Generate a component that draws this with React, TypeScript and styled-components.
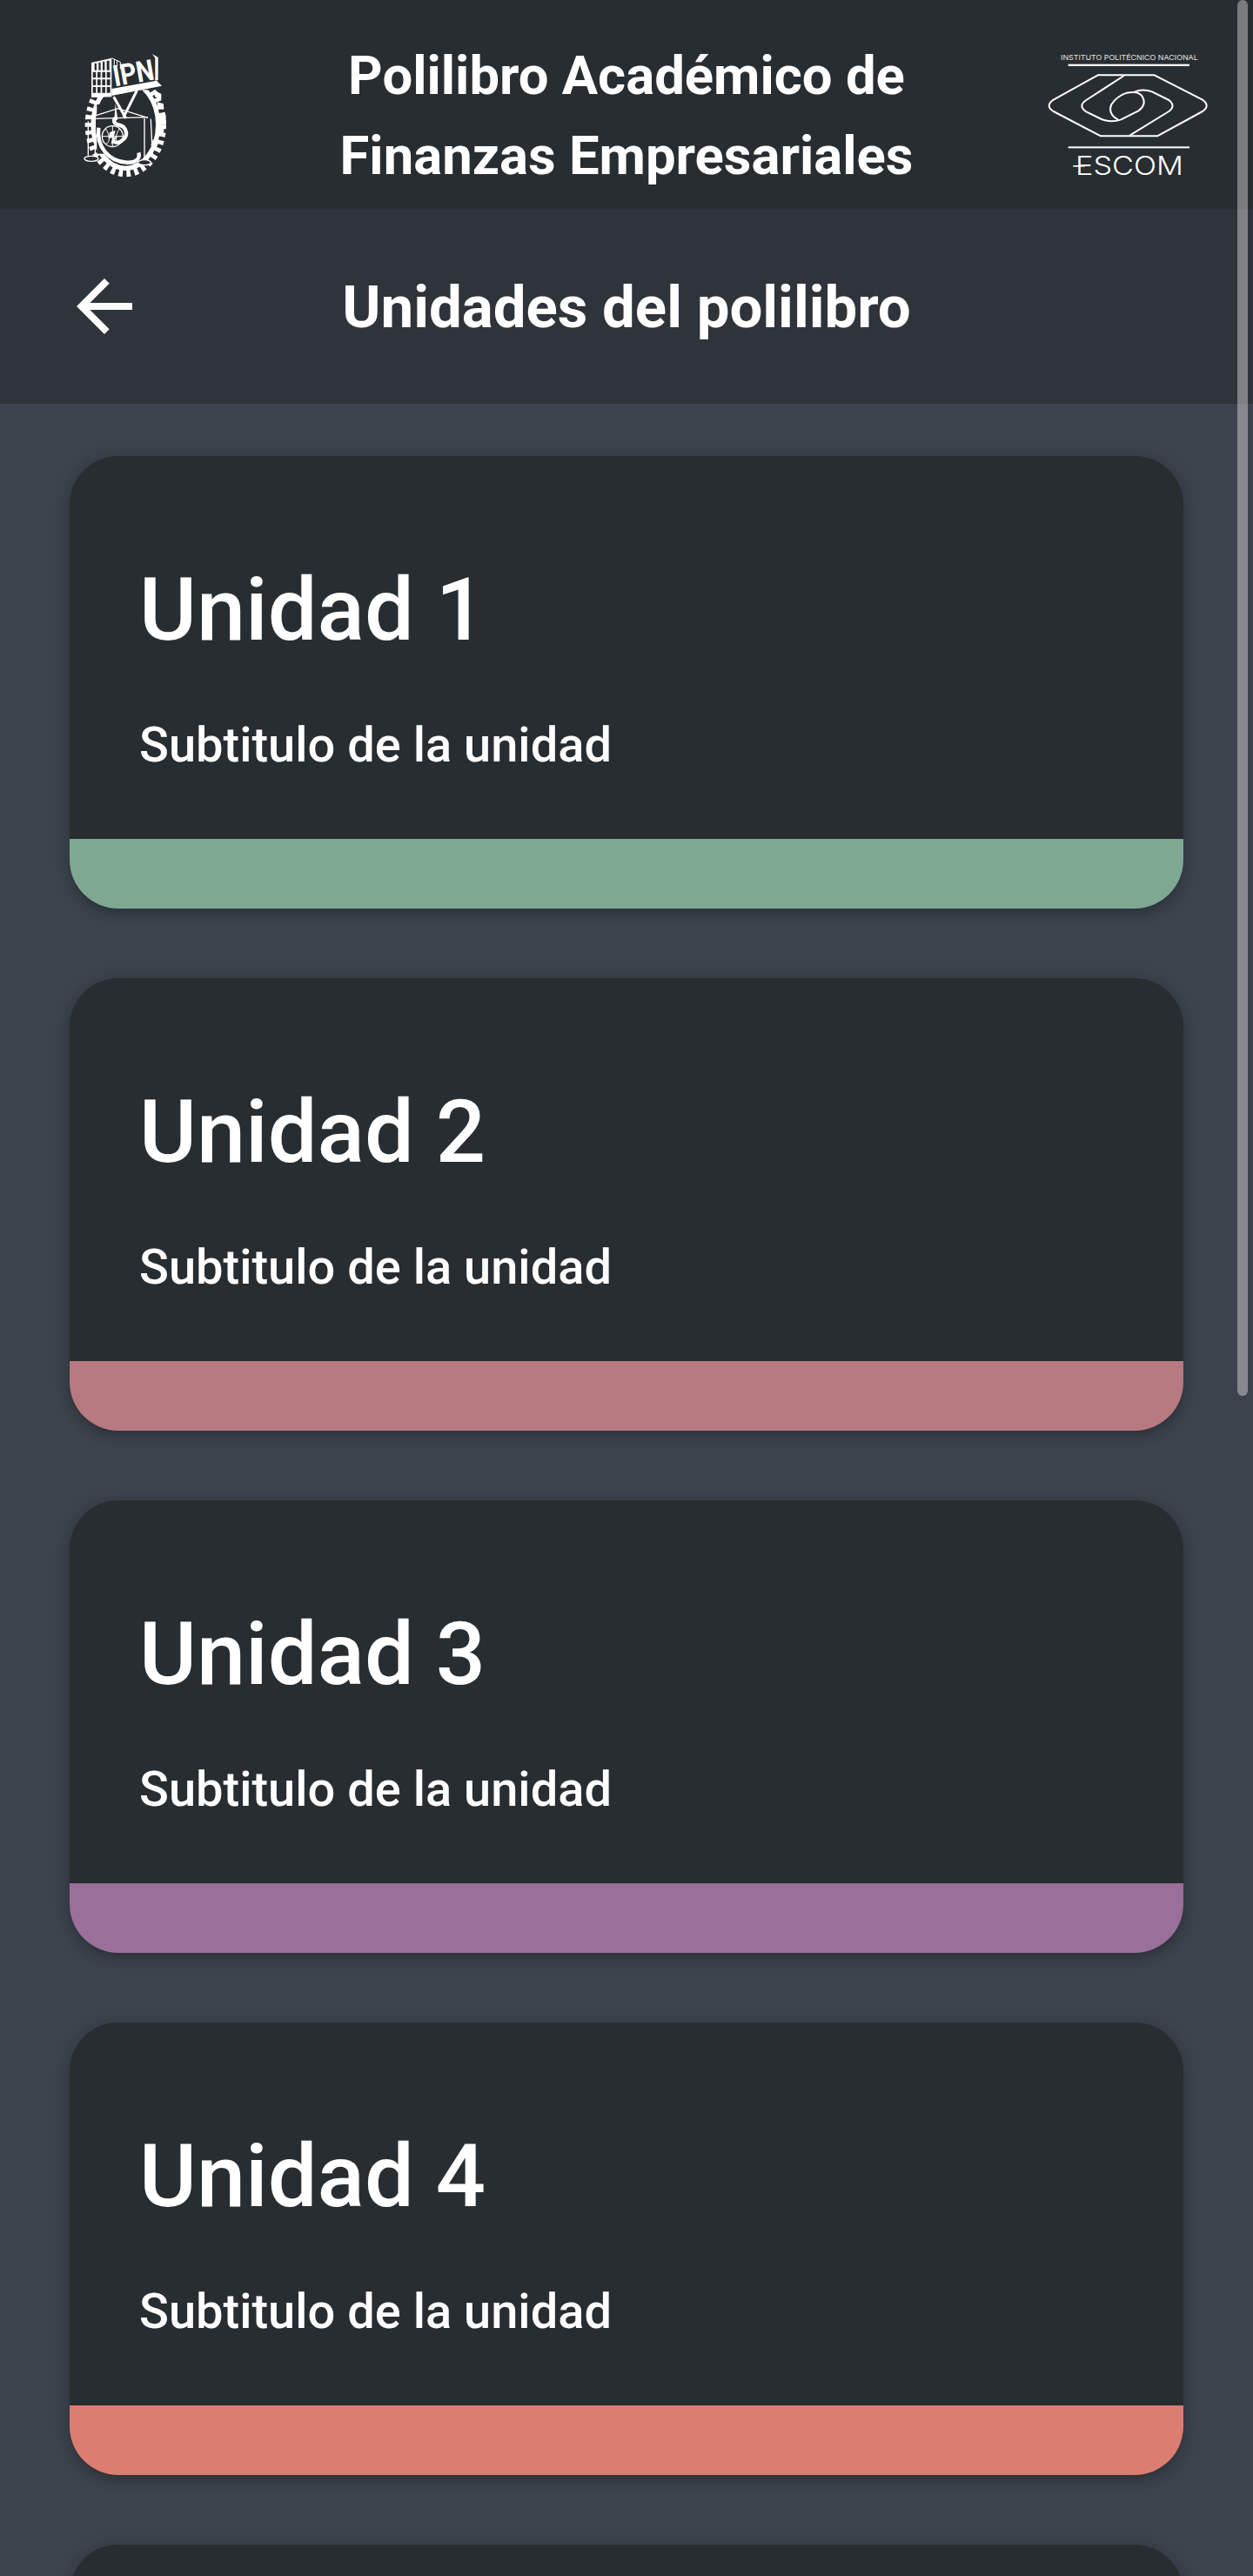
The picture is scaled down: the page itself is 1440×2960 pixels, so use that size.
import React from "react";
import styled, { createGlobalStyle } from "styled-components";

const GlobalStyle = createGlobalStyle`
  html, body {
    margin: 0;
    padding: 0;
    height: 100%;
    overflow: hidden;
    background-color: #3c434c;
  }
  * {
    box-sizing: border-box;
  }
`;

const Page = styled.div`
  position: relative;
  height: 100vh;
  overflow: hidden;
  background-color: #3c434c;
  color: #ffffff;
  font-family: Roboto, "Liberation Sans", sans-serif;
`;

const Header = styled.header`
  display: grid;
  grid-template-columns: 270px 1fr 270px;
  align-items: center;
  height: 240px;
  background-color: #282d31;
`;

const LeftLogo = styled.svg`
  display: block;
  width: 150px;
  height: 180px;
  margin-left: 60px;
`;

const RightLogo = styled.svg`
  display: block;
  width: 240px;
  height: 200px;
  margin-left: 10px;
`;

const AppTitle = styled.h1`
  align-self: start;
  margin: 0;
  padding-top: 41px;
  font-size: 61.6px;
  line-height: 92.4px;
  font-weight: 700;
  text-align: center;
`;

const SubHeader = styled.div`
  display: grid;
  grid-template-columns: 270px 1fr 270px;
  align-items: center;
  height: 224px;
  background-color: #2f343b;
`;

const BackButton = styled.button`
  display: flex;
  width: 96px;
  height: 96px;
  margin-left: 72px;
  padding: 0;
  border: none;
  background: none;
  color: #ffffff;
`;

const SectionTitle = styled.h2`
  margin: 0;
  padding-top: 2px;
  font-size: 67.2px;
  line-height: 80px;
  font-weight: 700;
  text-align: center;
`;

const CardList = styled.main`
  display: flex;
  flex-direction: column;
  gap: 80px;
  padding: 60px 80px;
`;

const Card = styled.article`
  display: flex;
  flex-direction: column;
  height: 520px;
  flex-shrink: 0;
  overflow: hidden;
  border-radius: 56px;
  background-color: #282d31;
  box-shadow: 0 6px 12px -2px rgba(20, 22, 30, 0.35), 0 2px 20px rgba(20, 22, 30, 0.15);
`;

const CardBody = styled.div`
  flex: 1;
  padding: 118px 80px 0;
`;

const CardTitle = styled.h3`
  margin: 0;
  font-size: 100.8px;
  line-height: 118px;
  font-weight: 500;
`;

const CardSubtitle = styled.p`
  margin: 63px 0 0;
  font-size: 56px;
  line-height: 66px;
  font-weight: 500;
`;

const CardStrip = styled.div<{ $color: string }>`
  height: 80px;
  background-color: ${(props) => props.$color};
`;

const ScrollThumb = styled.div`
  position: absolute;
  top: 0;
  right: 6px;
  width: 12px;
  height: 1604px;
  border-radius: 6px;
  background-color: rgba(255, 255, 255, 0.38);
`;

const units = [
  { title: "Unidad 1", color: "#7fa893" },
  { title: "Unidad 2", color: "#b67a80" },
  { title: "Unidad 3", color: "#9a6f9a" },
  { title: "Unidad 4", color: "#dc7d72" },
];

const IpnLogo = () => (
  <LeftLogo viewBox="0 -30 450 540">
    {/* gear: ring, teeth, 3d teeth on the right */}
    <ellipse cx="253" cy="310" rx="128" ry="168" fill="none" stroke="#fff" strokeWidth="24" strokeDasharray="14 13" />
    <ellipse cx="253" cy="310" rx="112" ry="150" fill="none" stroke="#fff" strokeWidth="16" />
    <rect x="100" y="40" width="290" height="150" fill="#282d31" />
    <rect x="154" y="240" width="160" height="170" fill="#282d31" />
    <path d="M350 190l26 14v18l-22-8zM362 232l22 6v20l-22-4zM368 275l24 2v22l-24-3zM362 318l24 6-4 22-24-6zM348 360l20 8-8 20-20-8z" fill="#fff" />
    {/* building */}
    <path d="M135 96l70-16v134l-70 2z" fill="#fff" />
    <g fill="#282d31">
      <path d="M146 98h7v24h-7zM160 95h7v27h-7zM174 92h7v30h-7zM188 89h9v33h-9z" />
      <path d="M140 128h11v20h-11zM156 128h11v20h-11zM172 128h11v20h-11zM188 128h12v20h-12z" />
      <path d="M140 154h11v20h-11zM156 154h11v20h-11zM172 154h11v20h-11zM188 154h12v20h-12z" />
      <path d="M140 180h11v20h-11zM156 180h11v20h-11zM172 180h11v20h-11zM188 180h12v20h-12z" />
    </g>
    <path d="M205 80l30 14v24M214 84v22M224 88v20" fill="none" stroke="#fff" strokeWidth="3" />
    {/* letters and the beam under them */}
    <text x="216" y="178" fontFamily="Roboto, sans-serif" fontWeight="700" fontSize="100" fill="#fff" textLength="142" lengthAdjust="spacingAndGlyphs" transform="rotate(-10 216 178)">IPN</text>
    <path d="M345 66l20 12v78l-10 2V80z" fill="#fff" />
    <path d="M205 186l155-28 18 18-173 34z" fill="#fff" />
    {/* compass and truss */}
    <g fill="none" stroke="#fff">
      <path d="M212 214l42 74M292 192l-46 92" strokeWidth="9" />
      <path d="M114 290l112-36 104 32M114 290l216-6M124 298v118M148 298v120M318 288v140M340 290l6 130" strokeWidth="4" />
      <path d="M222 286c-14 6-10 22 6 24 26 4 36 32 18 50-14 14-30 14-36 6" strokeWidth="13" />
      <path d="M160 320c-8 66 34 116 96 120 32 2 48-12 42-34" strokeWidth="13" />
      <circle cx="208" cy="350" r="36" strokeWidth="4" />
      <path d="M172 350h72M208 314v72M184 324c16 20 16 52 0 52M232 324c-16 20-16 52 0 52" strokeWidth="3" />
    </g>
    <path d="M218 236l8 56-12 4zM198 336l20-6-6 24 14-4-24 28 6-24-14 4z" fill="#fff" />
    {/* scale pans */}
    <g fill="#282d31" stroke="#fff" strokeWidth="4">
      <ellipse cx="135" cy="427" rx="24" ry="9" />
      <ellipse cx="318" cy="440" rx="22" ry="9" />
    </g>
  </LeftLogo>
);

const EscomLogo = () => (
  <RightLogo viewBox="0 -60 720 600">
    <text x="117" y="88" fontFamily="Inter, sans-serif" fontSize="24" fill="#e4e4e4" textLength="473" lengthAdjust="spacingAndGlyphs">INSTITUTO POLITÉCNICO NACIONAL</text>
    <rect x="143" y="101" width="418" height="7" fill="#fff" />
    <g fill="none" stroke="#fff" strokeWidth="6" strokeLinejoin="round">
      <path d="M245 139H440L606 224Q634 245 606 264L450 349H255L92 264Q62 245 92 224Z" />
      <path d="M335 141L205 225Q175 245 205 265L258 291Q292 304 325 292L385 262Q415 240 398 212Q385 192 345 200Q310 212 292 240Q278 272 315 293" />
      <path d="M372 196Q400 185 432 196L490 225Q515 245 490 264L355 347" />
    </g>
    <rect x="143" y="385" width="418" height="6" fill="#fff" />
    <text x="168" y="484" fontFamily="Inter, sans-serif" fontWeight="300" fontSize="90" fill="#fff" textLength="372" lengthAdjust="spacingAndGlyphs">ESCOM</text>
    <rect x="160" y="450" width="40" height="5" fill="#fff" />
  </RightLogo>
);

const App = () => {
  return (
    <Page>
      <GlobalStyle />
      <Header>
        <IpnLogo />
        <AppTitle>
          Polilibro Académico de
          <br />
          Finanzas Empresariales
        </AppTitle>
        <EscomLogo />
      </Header>
      <SubHeader>
        <BackButton aria-label="Volver">
          <svg viewBox="0 0 24 24" width="96" height="96" fill="currentColor">
            <path d="M20 11H7.83l5.59-5.59L12 4l-8 8 8 8 1.41-1.41L7.83 13H20v-2z" />
          </svg>
        </BackButton>
        <SectionTitle>Unidades del polilibro</SectionTitle>
      </SubHeader>
      <CardList>
        {units.map((unit) => (
          <Card key={unit.title}>
            <CardBody>
              <CardTitle>{unit.title}</CardTitle>
              <CardSubtitle>Subtitulo de la unidad</CardSubtitle>
            </CardBody>
            <CardStrip $color={unit.color} />
          </Card>
        ))}
        {/* next card only peeks in at the bottom of the screen */}
        <Card />
      </CardList>
      <ScrollThumb />
    </Page>
  );
};

export default App;
